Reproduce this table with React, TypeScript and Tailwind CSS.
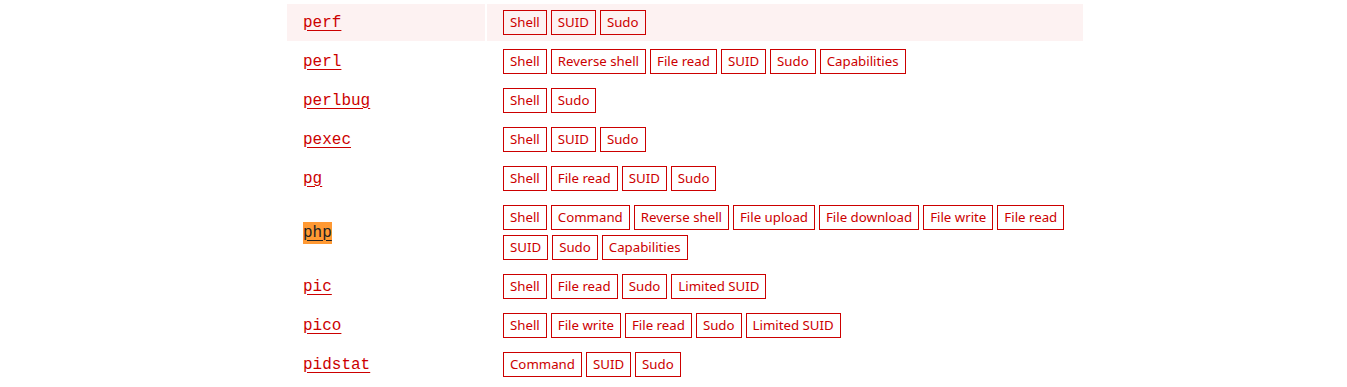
const rows: { name: string; tags: string[]; target?: boolean }[] = [
  { name: "perf", tags: ["Shell", "SUID", "Sudo"] },
  { name: "perl", tags: ["Shell", "Reverse shell", "File read", "SUID", "Sudo", "Capabilities"] },
  { name: "perlbug", tags: ["Shell", "Sudo"] },
  { name: "pexec", tags: ["Shell", "SUID", "Sudo"] },
  { name: "pg", tags: ["Shell", "File read", "SUID", "Sudo"] },
  {
    name: "php",
    target: true,
    tags: [
      "Shell",
      "Command",
      "Reverse shell",
      "File upload",
      "File download",
      "File write",
      "File read",
      "SUID",
      "Sudo",
      "Capabilities",
    ],
  },
  { name: "pic", tags: ["Shell", "File read", "Sudo", "Limited SUID"] },
  { name: "pico", tags: ["Shell", "File write", "File read", "Sudo", "Limited SUID"] },
  { name: "pidstat", tags: ["Command", "SUID", "Sudo"] },
];

export default function App() {
  return (
    <div className="min-h-screen bg-white pt-[2px]">
      <div className="ml-[285px] grid w-[800px] grid-cols-[198px_596px] gap-[2px] p-[2px]">
        {rows.map((row, i) => {
          const hovered = i === 0;
          return (
            <div key={row.name} className="contents">
              <div
                className={
                  "flex items-center pl-4 " + (hovered ? "bg-[#fdf2f2]" : "")
                }
              >
                <a
                  href="#"
                  className={
                    "font-['Liberation_Mono',monospace] text-[16px] leading-[22px] underline decoration-1 underline-offset-[3px] " +
                    (row.target
                      ? "bg-[#ff9933] text-[#222] decoration-[#222]"
                      : "text-[#cc0000]")
                  }
                >
                  {row.name}
                </a>
              </div>
              <div
                className={
                  "flex flex-wrap gap-x-[4px] gap-y-[5px] px-4 py-[6px] " +
                  (hovered ? "bg-[#fdf2f2]" : "")
                }
              >
                {row.tags.map((tag) => (
                  <span
                    key={tag}
                    className="flex h-[25px] items-center border border-[#cc0000] px-[6px] font-['Noto_Sans',sans-serif] text-[13.25px] text-[#cc0000]"
                  >
                    {tag}
                  </span>
                ))}
              </div>
            </div>
          );
        })}
      </div>
    </div>
  );
}
